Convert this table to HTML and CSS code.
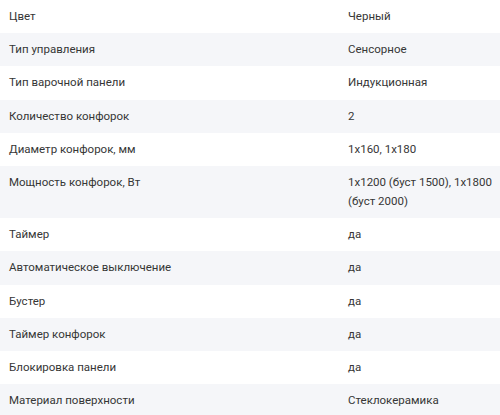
FILE: index.html
```html
<!DOCTYPE html>
<html lang="ru">
<head>
<meta charset="utf-8">
<link rel="stylesheet" href="styles.css">
</head>
<body>
<table class="specs">
  <tbody>
    <tr><td class="name">Цвет</td><td class="value">Черный</td></tr>
    <tr><td class="name">Тип управления</td><td class="value">Сенсорное</td></tr>
    <tr><td class="name">Тип варочной панели</td><td class="value">Индукционная</td></tr>
    <tr><td class="name">Количество конфорок</td><td class="value">2</td></tr>
    <tr><td class="name">Диаметр конфорок, мм</td><td class="value">1x160, 1x180</td></tr>
    <tr><td class="name">Мощность конфорок, Вт</td><td class="value">1x1200 (буст 1500), 1x1800 (буст 2000)</td></tr>
    <tr><td class="name">Таймер</td><td class="value">да</td></tr>
    <tr><td class="name">Автоматическое выключение</td><td class="value">да</td></tr>
    <tr><td class="name">Бустер</td><td class="value">да</td></tr>
    <tr><td class="name">Таймер конфорок</td><td class="value">да</td></tr>
    <tr><td class="name">Блокировка панели</td><td class="value">да</td></tr>
    <tr><td class="name">Материал поверхности</td><td class="value">Стеклокерамика</td></tr>
  </tbody>
</table>
</body>
</html>
```
FILE: styles.css
```css
html, body {
  margin: 0;
  padding: 0;
  background: #ffffff;
}
body {
  font-family: Roboto, "Noto Sans", sans-serif;
  font-size: 11.5px;
  color: #363636;
}
.specs {
  width: 500px;
  border-collapse: collapse;
  table-layout: fixed;
}
.specs tr:nth-child(even) {
  background: #f5f6f9;
}
.specs td {
  padding: 7px 4px 7.2px 9px;
  line-height: 19px;
  vertical-align: top;
}
.specs .name {
  width: 327px;
}
.specs .value {
  padding-left: 8px;
}
```
